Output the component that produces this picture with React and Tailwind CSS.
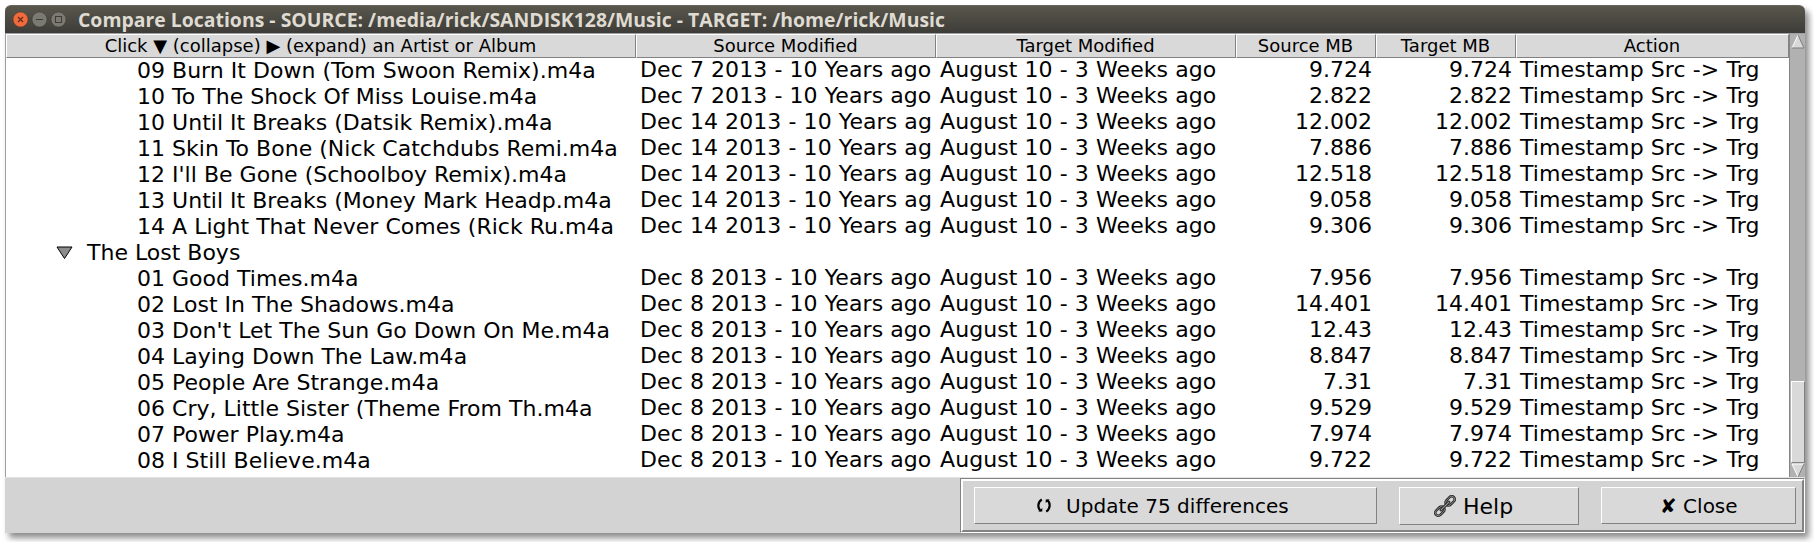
const rows = [
  ["09 Burn It Down (Tom Swoon Remix).m4a", "Dec 7 2013 - 10 Years ago", "9.724"],
  ["10 To The Shock Of Miss Louise.m4a", "Dec 7 2013 - 10 Years ago", "2.822"],
  ["10 Until It Breaks (Datsik Remix).m4a", "Dec 14 2013 - 10 Years ag", "12.002"],
  ["11 Skin To Bone (Nick Catchdubs Remi.m4a", "Dec 14 2013 - 10 Years ag", "7.886"],
  ["12 I'll Be Gone (Schoolboy Remix).m4a", "Dec 14 2013 - 10 Years ag", "12.518"],
  ["13 Until It Breaks (Money Mark Headp.m4a", "Dec 14 2013 - 10 Years ag", "9.058"],
  ["14 A Light That Never Comes (Rick Ru.m4a", "Dec 14 2013 - 10 Years ag", "9.306"],
  ["The Lost Boys"],
  ["01 Good Times.m4a", "Dec 8 2013 - 10 Years ago", "7.956"],
  ["02 Lost In The Shadows.m4a", "Dec 8 2013 - 10 Years ago", "14.401"],
  ["03 Don't Let The Sun Go Down On Me.m4a", "Dec 8 2013 - 10 Years ago", "12.43"],
  ["04 Laying Down The Law.m4a", "Dec 8 2013 - 10 Years ago", "8.847"],
  ["05 People Are Strange.m4a", "Dec 8 2013 - 10 Years ago", "7.31"],
  ["06 Cry, Little Sister (Theme From Th.m4a", "Dec 8 2013 - 10 Years ago", "9.529"],
  ["07 Power Play.m4a", "Dec 8 2013 - 10 Years ago", "7.974"],
  ["08 I Still Believe.m4a", "Dec 8 2013 - 10 Years ago", "9.722"],
];

const GRID = "grid grid-cols-[630px_300px_300px_140px_140px_273px]";
const HEADERS = [
  "Click ▼ (collapse) ▶ (expand) an Artist or Album",
  "Source Modified",
  "Target Modified",
  "Source MB",
  "Target MB",
  "Action",
];

function TitleBar() {
  return (
    <div className="flex h-[28px] items-center rounded-t-[6px] border-t border-[#68665a] bg-linear-to-b from-[#59574c] to-[#3d3c38] pl-[7px]">
      <svg width="56" height="18" viewBox="0 0 56 18" className="shrink-0">
        <circle cx="8.5" cy="8.5" r="7.5" fill="#f06a3c" stroke="#4a352c" strokeWidth="0.5" />
        <path d="M6 6l5 5M11 6l-5 5" stroke="#5a2c1c" strokeWidth="1.2" />
        <circle cx="27.5" cy="8.5" r="7.5" fill="#7b7a72" stroke="#38372f" strokeWidth="0.5" />
        <path d="M24 8.500h7" stroke="#3c3b37" strokeWidth="1" />
        <circle cx="46.5" cy="8.5" r="7.5" fill="#7b7a72" stroke="#38372f" strokeWidth="0.5" />
        <rect x="43.5" y="5.5" width="6" height="6" fill="none" stroke="#3c3b37" strokeWidth="1" />
      </svg>
      <svg width="880" height="27" className="ml-[10px] shrink-0">
        <text x="0" y="20.5" textLength="867" lengthAdjust="spacingAndGlyphs" className="fill-[#dfdbd2] font-['Open_Sans',sans-serif] text-[19px] font-bold">
          Compare Locations - SOURCE: /media/rick/SANDISK128/Music - TARGET: /home/rick/Music
        </text>
      </svg>
    </div>
  );
}

function Row({ row }) {
  const [name, date, size] = row;
  if (!date) {
    return (
      <div className="flex h-[26px] items-center pl-[50px]">
        <svg width="17" height="13" viewBox="0 0 17 13">
          <path d="M1 1h15L8.500 12.500z" fill="#8c8c8c" stroke="#000" />
        </svg>
        <span className="ml-[14px]">{name}</span>
      </div>
    );
  }
  return (
    <div className={GRID + " h-[26px] leading-[26px]"}>
      <span className="relative top-px pl-[131px] tracking-[0.02px]">{name}</span>
      <span className="pl-[4px] tracking-[0.08px]">{date}</span>
      <span className="pl-[4px] tracking-[0.08px]">August 10 - 3 Weeks ago</span>
      <span className="pr-[4px] text-right">{size}</span>
      <span className="pr-[4px] text-right">{size}</span>
      <span className="pl-[4px] tracking-[0.1px]">Timestamp Src -&gt; Trg</span>
    </div>
  );
}

function ScrollBar() {
  return (
    <div className="flex w-[16px] flex-col items-center border-l border-[#858585] bg-[#b1b1b1]">
      <svg width="14" height="15" viewBox="0 0 14 15" className="shrink-0">
        <path d="M7 1L13 14H1z" fill="#d9d9d9" />
        <path d="M1 14L7 1" stroke="#fff" />
        <path d="M7 1l6 13H1" stroke="#7d7d7d" fill="none" />
      </svg>
      <div className="mt-[332px] h-[82px] w-[14px] shrink-0 border border-t-white border-l-white border-r-[#828282] border-b-[#828282] bg-[#d9d9d9]" />
      <svg width="14" height="15" viewBox="0 0 14 15" className="shrink-0">
        <path d="M1 1h12L7 14z" fill="#d9d9d9" />
        <path d="M13 1H1l6 13" stroke="#fff" fill="none" />
        <path d="M7 14l6-13" stroke="#7d7d7d" />
      </svg>
    </div>
  );
}

const BUTTON =
  "flex items-center border border-t-white border-l-white border-r-[#828282] border-b-[#828282] bg-[#d9d9d9] whitespace-nowrap";

function RefreshIcon() {
  return (
    <svg width="14" height="15" viewBox="0 0 14 15" className="shrink-0" fill="none" stroke="#000" strokeWidth="2.2">
      <path d="M4.800 1.500C0.500 4 0.300 10.300 3.800 12.800" />
      <path d="M9.200 13.500C13.500 11 13.700 4.700 10.200 2.200" />
      <path d="M1.300 13.600h4v-3.600zM12.700 1.400h-4v3.600z" fill="#000" stroke="none" />
    </svg>
  );
}

function ChainIcon() {
  return (
    <svg width="22" height="22" viewBox="0 0 22 22" className="shrink-0" fill="none">
      <g transform="rotate(-45 11 11)">
        <rect x="-1.500" y="8" width="10.500" height="6" rx="3" stroke="#262626" strokeWidth="2.600" />
        <rect x="13" y="8" width="10.500" height="6" rx="3" stroke="#262626" strokeWidth="2.600" />
        <rect x="-1.500" y="8" width="10.500" height="6" rx="3" stroke="#a0a0a0" strokeWidth="0.800" />
        <rect x="13" y="8" width="10.500" height="6" rx="3" stroke="#a0a0a0" strokeWidth="0.800" />
        <path d="M5.500 11h11" stroke="#262626" strokeWidth="3" strokeLinecap="round" />
        <path d="M5.500 11h11" stroke="#a0a0a0" strokeWidth="1" strokeLinecap="round" />
      </g>
    </svg>
  );
}

export default function App() {
  return (
    <div className="h-[542px] w-[1814px] overflow-hidden bg-white pt-[5px] pl-[5px] font-['DejaVu_Sans',sans-serif] text-black">
      <div className="flex h-[528px] w-[1800px] flex-col rounded-t-[6px] shadow-[4px_5px_6px_rgba(0,0,0,0.45)]">
        <TitleBar />
        <div className="flex h-[444px] border-t border-l border-[#a0a0a0] bg-white">
          <div className="w-[1783px] overflow-hidden">
            <div className={GRID + " h-[23px] text-[18px] leading-[22px]"}>
              {HEADERS.map((h) => (
                <div key={h} className="border border-t-white border-l-white border-r-[#828282] border-b-[#828282] bg-[#d9d9d9] pr-px text-center whitespace-nowrap">
                  {h}
                </div>
              ))}
            </div>
            <div className="text-[22px] whitespace-nowrap">
              {rows.map((r) => (
                <Row key={r[0]} row={r} />
              ))}
            </div>
          </div>
          <ScrollBar />
        </div>
        <div className="flex h-[56px] items-end justify-end border-t border-[#e4e4e4] bg-[#d3d3d3]">
          <div className="h-[55px] w-[845px] border border-t-[#828282] border-r-white border-b-white border-l-[#828282]">
            <div className="flex h-[53px] items-start gap-[22px] border-2 border-t-white border-r-[#828282] border-b-[#828282] border-l-white pt-[6px] pl-[11px]">
              <button className={BUTTON + " h-[37px] w-[403px] gap-[15px] pl-[62px] text-[20px] leading-[34px] tracking-[0.05px]"}>
                <RefreshIcon />
                Update 75 differences
              </button>
              <button className={BUTTON + " h-[38px] w-[180px] gap-[7px] pl-[34px] text-[22px]"}>
                <ChainIcon />
                Help
              </button>
              <button className={BUTTON + " h-[37px] w-[195px] pl-[58px] text-[20px]"}>✘ Close</button>
            </div>
          </div>
        </div>
      </div>
    </div>
  );
}
